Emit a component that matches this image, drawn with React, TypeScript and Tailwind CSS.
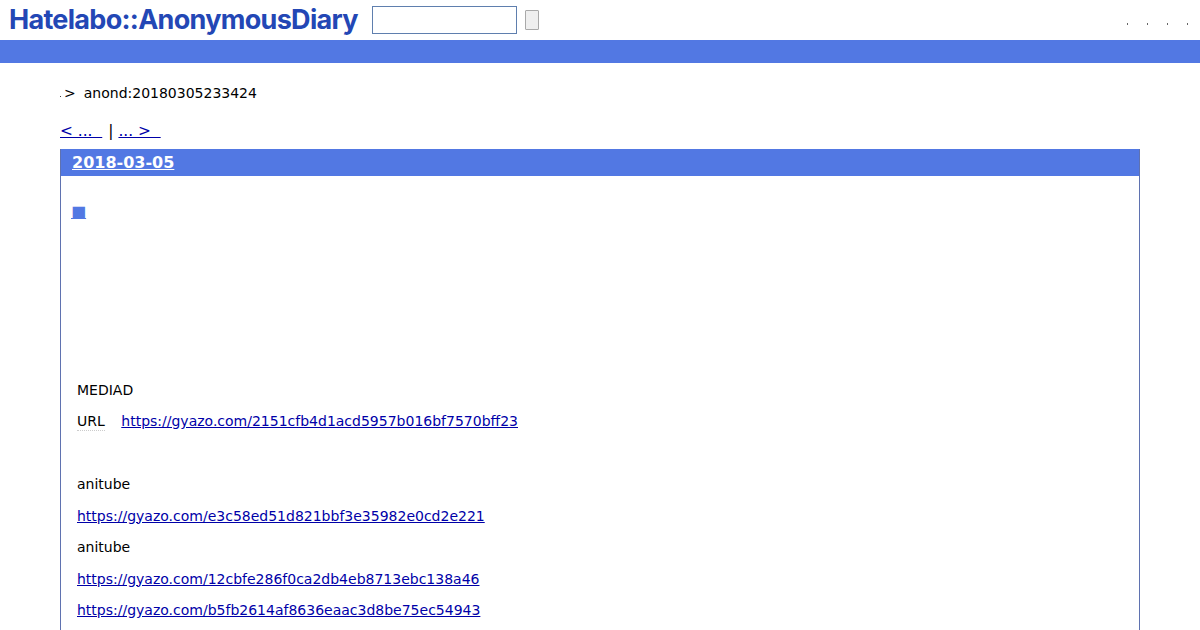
export default function App() {
  const linkCls = "text-[#0000a8] underline";
  return (
    <div className="h-[630px] overflow-hidden bg-white text-[14px] leading-[21px] text-black font-['DejaVu_Sans',sans-serif]">
      <header className="flex h-10 items-start">
        <h1 className="ml-[9px] mt-[3px] w-[363px] text-[27px] leading-[34px] font-bold tracking-[-0.7px] text-[#2347b5] font-['Inter',sans-serif]">Hatelabo::AnonymousDiary</h1>
        <input className="mt-[6px] h-[28px] w-[145px] border border-[#5f7fae] bg-white" />
        <div className="ml-[8px] mt-[10px] h-[20px] w-[14px] rounded-[1px] border border-[#a9a9a9] bg-[#efefef]" />
        <div className="ml-auto mr-[12px] mt-[23px] flex gap-[19px]">
          <span className="h-[2px] w-px bg-[#666]" />
          <span className="h-[2px] w-px bg-[#666]" />
          <span className="h-[2px] w-px bg-[#666]" />
          <span className="h-[2px] w-px bg-[#666]" />
        </div>
      </header>
      <div className="h-[23px] bg-[#5278e3]" />
      <main className="mx-[60px]">
        <div className="mt-[19.5px] flex items-center">
          <span className="mt-[7px] h-px w-px bg-[#444]" />
          <span className="ml-[3px]">&gt;</span>
          <span className="ml-[8px]">anond:20180305233424</span>
        </div>
        <div className="mt-[18px] mb-[8px] flex h-[19px] items-center text-[15.4px]">
          <a className={linkCls + " whitespace-pre"}>&lt; ...  </a>
          <span className="ml-[6px] mr-[5px] text-black">|</span>
          <a className={linkCls + " whitespace-pre"}>... &gt;  </a>
        </div>
        <section className="h-[520px] border-x border-[#5f72b0]">
          <h2 className="h-[27px] bg-[#5278e3] pl-[11px] text-[16px] leading-[27px] font-bold text-white">
            <span className="underline">2018-03-05</span>
          </h2>
          <div className="pl-[10px] pt-[26px]">
            <a className="block w-[15px] text-[16px] leading-[19px] text-[#5278e3] underline">■</a>
          </div>
          <div className="flex flex-col gap-[10.5px] pl-[16px] pt-[159px]">
            <p>MEDIAD</p>
            <p className="flex">
              <span className="h-[20px] border-b border-dotted border-[#ccc]">URL</span>
              <a className={linkCls + " ml-[16.5px]"}>https://gyazo.com/2151cfb4d1acd5957b016bf7570bff23</a>
            </p>
            <p className="mt-[31.5px]">anitube</p>
            <a className={linkCls}>https://gyazo.com/e3c58ed51d821bbf3e35982e0cd2e221</a>
            <p>anitube</p>
            <a className={linkCls}>https://gyazo.com/12cbfe286f0ca2db4eb8713ebc138a46</a>
            <a className={linkCls}>https://gyazo.com/b5fb2614af8636eaac3d8be75ec54943</a>
          </div>
        </section>
      </main>
    </div>
  );
}
